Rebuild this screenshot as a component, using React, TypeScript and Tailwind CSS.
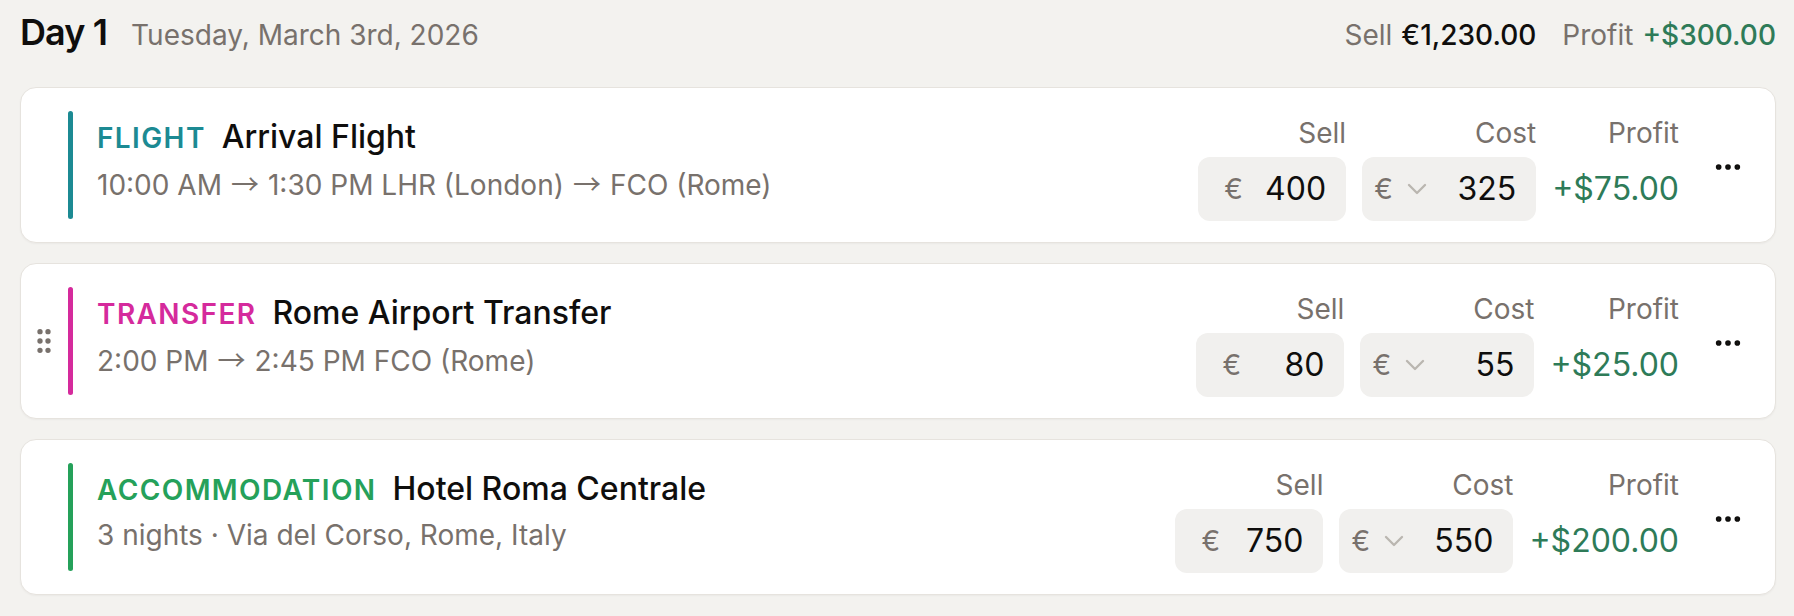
import { ChevronDown, Ellipsis, GripVertical } from 'lucide-react'

type Item = {
  kind: string
  accent: string
  bar: string
  title: string
  sub: string
  sell: string
  cost: string
  profit: string
  grip?: boolean
}

const items: Item[] = [
  {
    kind: 'FLIGHT',
    accent: 'text-[#1c8a93]',
    bar: 'bg-[#1c8a93]',
    title: 'Arrival Flight',
    sub: '10:00 AM → 1:30 PM LHR (London) → FCO (Rome)',
    sell: '400',
    cost: '325',
    profit: '+$75.00',
  },
  {
    kind: 'TRANSFER',
    accent: 'text-[#d52a9c]',
    bar: 'bg-[#d52a9c]',
    title: 'Rome Airport Transfer',
    sub: '2:00 PM → 2:45 PM FCO (Rome)',
    sell: '80',
    cost: '55',
    profit: '+$25.00',
    grip: true,
  },
  {
    kind: 'ACCOMMODATION',
    accent: 'text-[#25a15a]',
    bar: 'bg-[#25a15a]',
    title: 'Hotel Roma Centrale',
    sub: '3 nights · Via del Corso, Rome, Italy',
    sell: '750',
    cost: '550',
    profit: '+$200.00',
  },
]

// the arrow in the reference is the long thin one, not Inter's
function Sub({ text }: { text: string }) {
  const parts = text.split(' → ')
  return (
    <>
      {parts.map((p, i) => (
        <span key={i}>
          {i > 0 && <span className="mx-[9px] font-['Noto_Sans_CJK_SC',sans-serif]">→</span>}
          {p}
        </span>
      ))}
    </>
  )
}

function ItemCard({ item }: { item: Item }) {
  return (
    <div className="flex h-[156px] items-center rounded-[16px] border border-[#e6e3de] bg-white py-[23px] pl-[7px] pr-[31px] shadow-[0_1px_2px_rgba(0,0,0,0.04)]">
      <div className="flex h-full min-w-0 flex-1 items-stretch">
        <div className="flex w-[32px] items-center justify-center text-[#78716c]">
          {item.grip && <GripVertical size={32} strokeWidth={2} />}
        </div>
        <div className={`ml-[8px] w-[5px] rounded-full ${item.bar}`} />
        <div className="ml-[24px] flex min-w-0 flex-col">
          <div className="flex items-baseline gap-[16px]">
            <span className={`text-[28px] font-semibold leading-[34px] tracking-wider ${item.accent}`}>
              {item.kind}
            </span>
            <span className="text-[32px] font-medium leading-[51px] text-[#0f0e0d]">{item.title}</span>
          </div>
          <div className="mt-[1px] h-[40px] text-[28px] leading-[40px] text-[#78716c]">
            <Sub text={item.sub} />
          </div>
        </div>
      </div>

      <div className="flex items-center pt-[4px]">
        <div className="flex items-end gap-[16px]">
          <div className="flex flex-col items-end">
            <span className="mb-[5px] text-[28px] leading-[38px] text-[#78716c]">Sell</span>
            <div className="flex h-[64px] w-[148px] items-center rounded-[12px] bg-[#f1f0ee] pl-[26px] pr-[20px]">
              <span className="text-[28px] text-[#78716c]">€</span>
              <span className="flex-1 text-right text-[32px] text-[#0f0e0d]">{item.sell}</span>
            </div>
          </div>
          <div className="flex flex-col items-end">
            <span className="mb-[5px] text-[28px] leading-[38px] text-[#78716c]">Cost</span>
            <div className="flex h-[64px] w-[174px] items-center rounded-[12px] bg-[#f1f0ee] pl-[12px] pr-[20px]">
              <span className="text-[28px] text-[#78716c]">€</span>
              <ChevronDown size={32} strokeWidth={1.75} className="ml-[8px] text-[#bab6b0]" />
              <span className="flex-1 text-right text-[32px] text-[#0f0e0d]">{item.cost}</span>
            </div>
          </div>
          <div className="flex flex-col items-end">
            <span className="mb-[5px] text-[28px] leading-[38px] text-[#78716c]">Profit</span>
            <div className="flex h-[64px] items-center text-[32px] text-[#2e7b58]">{item.profit}</div>
          </div>
        </div>
      </div>
      <button className="ml-[33px] mt-[4px] flex h-[32px] w-[32px] items-center justify-center text-[#0f0e0d]">
        <Ellipsis size={32} strokeWidth={2.25} />
      </button>
    </div>
  )
}

export default function App() {
  return (
    <div className="min-h-screen bg-[#f3f2ef] pl-[20px] pr-[18px] font-['Inter','Noto_Sans',sans-serif]">
      <div className="mb-[27px] flex items-baseline justify-between pt-[4px]">
        <div className="flex items-baseline gap-[24px]">
          <h2 className="text-[36px] font-semibold leading-[56px] tracking-tight text-[#0f0e0d]">Day 1</h2>
          <span className="text-[28px] text-[#78716c]">Tuesday, March 3rd, 2026</span>
        </div>
        <div className="flex items-baseline gap-[26px] text-[28px]">
          <div className="flex items-baseline gap-[9px]">
            <span className="text-[#78716c]">Sell</span>
            <span className="font-medium text-[#0f0e0d]">€1,230.00</span>
          </div>
          <div className="flex items-baseline gap-[9px]">
            <span className="text-[#78716c]">Profit</span>
            <span className="font-medium text-[#2e7b58]">+$300.00</span>
          </div>
        </div>
      </div>

      <div className="flex flex-col gap-[20px]">
        {items.map((item) => (
          <ItemCard key={item.kind} item={item} />
        ))}
      </div>
    </div>
  )
}
